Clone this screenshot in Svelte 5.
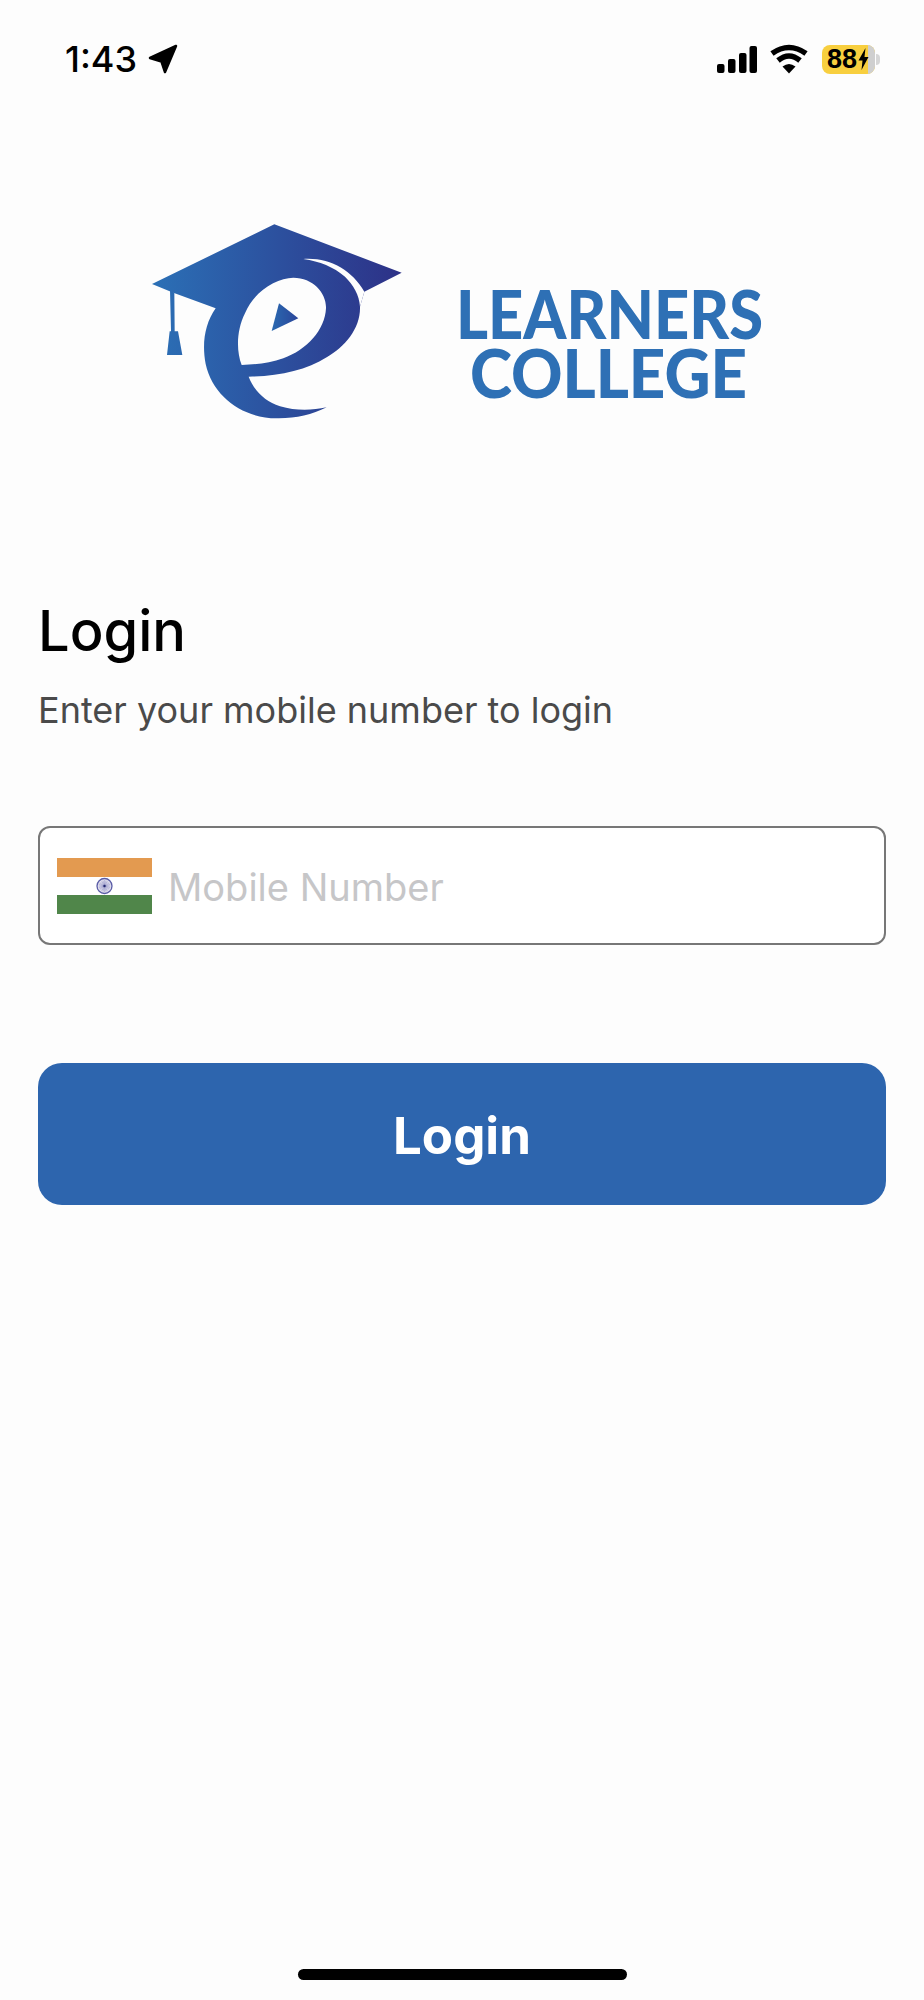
<script>
  const flagSpokes = Array.from({ length: 12 }, (_, i) => i * 15);
</script>

<div class="page">
  <header class="status">
    <div class="time">
      <span>1:43</span>
      <svg class="arrow" viewBox="0 0 30 30" aria-hidden="true"><path d="M28 2 L2 14 L13.5 17.5 L17 28 Z" /></svg>
    </div>
    <div class="sys">
      <svg class="signal" viewBox="0 0 40 27" aria-hidden="true">
        <rect x="0" y="18" width="7.5" height="9" rx="2" /><rect x="11" y="13" width="7.5" height="14" rx="2" /><rect x="22" y="7" width="7.5" height="20" rx="2" /><rect x="32.5" y="0" width="7.5" height="27" rx="2" />
      </svg>
      <svg class="wifi" viewBox="0 0 38 29" aria-hidden="true">
        <path d="M19 28.5 L12.5 21.5 Q19 16.5 25.5 21.5 Z" />
        <path d="M8 15.5 Q19 6.5 30 15.5" />
        <path d="M2 8.5 Q19 -3.5 36 8.5" />
      </svg>
      <div class="battery">
        <div class="cell">
          <span class="pct">88</span>
          <i class="rest"></i>
          <svg class="bolt" viewBox="0 0 10 22" aria-hidden="true"><path d="M7 0 L0 12.5 H4 L3 22 L10 9 H6 Z" /></svg>
        </div>
        <i class="nub"></i>
      </div>
    </div>
  </header>

  <div class="logo">
    <svg class="mark" viewBox="0 0 900 720" aria-hidden="true">
      <defs>
        <linearGradient id="lc" gradientUnits="userSpaceOnUse" x1="66" y1="0" x2="815" y2="0">
          <stop offset="0" stop-color="#2b70b6" />
          <stop offset="1" stop-color="#2d3187" />
        </linearGradient>
        <linearGradient id="lp" gradientUnits="userSpaceOnUse" x1="425" y1="0" x2="505" y2="0">
          <stop offset="0" stop-color="#2a69b0" />
          <stop offset="1" stop-color="#2a459a" />
        </linearGradient>
      </defs>
      <path fill="url(#lc)" d="M433 73 L815 218 L703 275 L690 320 C692 385 645 440 590 472 C530 510 445 530 356 530 C372 572 405 604 450 619 C497 633 545 632 590 622 C545 645 495 656 440 655 C340 655 248 590 227 492 C215 430 225 370 257 325 L130 278 L66 252 Z" />
      <path fill="#fdfdfd" d="M520 177 C600 172 665 210 703 275 L690 320 C688 285 670 255 645 230 C610 200 570 185 520 177 Z" />
      <path fill="#fdfdfd" d="M335 495 C318 450 320 390 345 340 C375 270 440 235 490 233 C550 233 590 280 588 325 C585 390 530 450 460 475 C420 490 380 493 335 495 Z" />
      <path fill="url(#lp)" d="M447 310 L505 355 L425 393 Z" />
      <path fill="url(#lc)" d="M120 270 L133 278 L134 394 L144 394 L157 465 L111 465 L119 394 L123 394 Z" />
    </svg>
    <svg class="word" viewBox="0 0 340 140" role="img" aria-label="Learners College">
      <text x="16" y="68.5" textLength="307" lengthAdjust="spacingAndGlyphs">LEARNERS</text>
      <text x="30" y="128" textLength="277" lengthAdjust="spacingAndGlyphs">COLLEGE</text>
    </svg>
  </div>

  <main class="form">
    <h1>Login</h1>
    <p class="sub">Enter your mobile number to login</p>

    <label class="field">
      <svg class="flag" viewBox="0 0 95 56" aria-hidden="true">
        <rect width="95" height="19" fill="#e39a50" />
        <rect y="37" width="95" height="19" fill="#50864a" />
        <circle cx="47.5" cy="28" r="7.5" fill="#e9e6f2" stroke="#5a5ca6" stroke-width="1.3" />
        {#each flagSpokes as a}
          <line x1="47.5" y1="22" x2="47.5" y2="34" stroke="#8f90c4" stroke-width=".5" transform="rotate({a} 47.5 28)" />
        {/each}
        <circle cx="47.5" cy="28" r="1.2" fill="#23266e" />
      </svg>
      <input type="tel" placeholder="Mobile Number" />
    </label>

    <button type="button" class="submit">Login</button>
  </main>

  <div class="home"></div>
</div>

<style>
  :global(body) { margin: 0; background: #fdfdfd; }
  .page {
    position: relative;
    width: 924px;
    height: 2000px;
    overflow: hidden;
    background: #fdfdfd;
    font-family: Inter, "Liberation Sans", sans-serif;
    color: #000;
  }
  .status {
    height: 46px;
    padding: 44px 0 0 65px;
    display: flex;
    justify-content: space-between;
    box-sizing: content-box;
  }
  .time { display: flex; align-items: center; height: 30px; gap: 11px; font-size: 36px; font-weight: 500; }
  .arrow { width: 30px; height: 30px; }
  .arrow path { stroke: #000; stroke-width: 2.5; stroke-linejoin: round; }
  .sys { display: flex; align-items: center; height: 30px; margin-right: 44px; }
  .signal { width: 40px; height: 27px; }
  .wifi { width: 38px; height: 29px; margin-left: 13px; overflow: visible; }
  .wifi path:first-child { fill: #000; }
  .wifi path:not(:first-child) { fill: none; stroke: #000; stroke-width: 5.5; }
  .battery { display: flex; align-items: center; margin-left: 14px; }
  .cell {
    position: relative;
    width: 53px;
    height: 29px;
    padding-left: 5px;
    box-sizing: border-box;
    background: #f8cf3f;
    border-radius: 8px;
    display: flex;
    align-items: center;
    overflow: hidden;
  }
  .pct { font-family: "Liberation Sans", sans-serif; font-size: 27px; font-weight: 700; color: #000; position: relative; z-index: 1; }
  .bolt { width: 11px; height: 22px; position: relative; z-index: 1; margin-left: 1px; }
  .rest { position: absolute; right: 0; top: 0; bottom: 0; width: 7px; background: #cfcfcf; }
  .nub { width: 4px; height: 11px; margin-left: 1px; background: #d6d6d6; border-radius: 0 4px 4px 0; }

  .logo { display: flex; height: 240px; margin-top: 110px; margin-left: 130px; }
  .mark { width: 300px; height: 240px; }
  .word { width: 340px; height: 140px; margin: 70px 0 0 10px; overflow: visible; }
  .word text {
    font-family: Lato, "Open Sans", sans-serif;
    font-weight: 900;
    font-size: 66px;
    fill: #2e70b5;
  }

  .form { padding: 0 38px; margin-top: 156px; }
  h1 { margin: 0; font-size: 56px; line-height: 70px; font-weight: 500; }
  .sub { margin: 20px 0 0; font-size: 36px; line-height: 48px; color: #4a4a4a; }
  .field {
    margin-top: 92px;
    height: 119px;
    box-sizing: border-box;
    border: 2px solid #777;
    border-radius: 12px;
    background: #fff;
    display: flex;
    align-items: center;
    padding-left: 17px;
  }
  .flag { width: 95px; height: 56px; flex: none; }
  input {
    flex: 1;
    min-width: 0;
    margin-left: 16px;
    border: 0;
    outline: 0;
    padding: 2px 0 0;
    background: transparent;
    font: inherit;
    font-size: 38px;
  }
  input::placeholder { color: #c6c6c8; opacity: 1; }
  .submit {
    display: block;
    width: 100%;
    height: 142px;
    margin-top: 118px;
    padding: 2px 0 0;
    border: 0;
    border-radius: 24px;
    background: #2d65ae;
    color: #fff;
    font: inherit;
    font-size: 51px;
    font-weight: 700;
  }
  .home {
    position: absolute;
    left: 298px;
    top: 1969px;
    width: 329px;
    height: 11px;
    border-radius: 6px;
    background: #000;
  }
</style>
